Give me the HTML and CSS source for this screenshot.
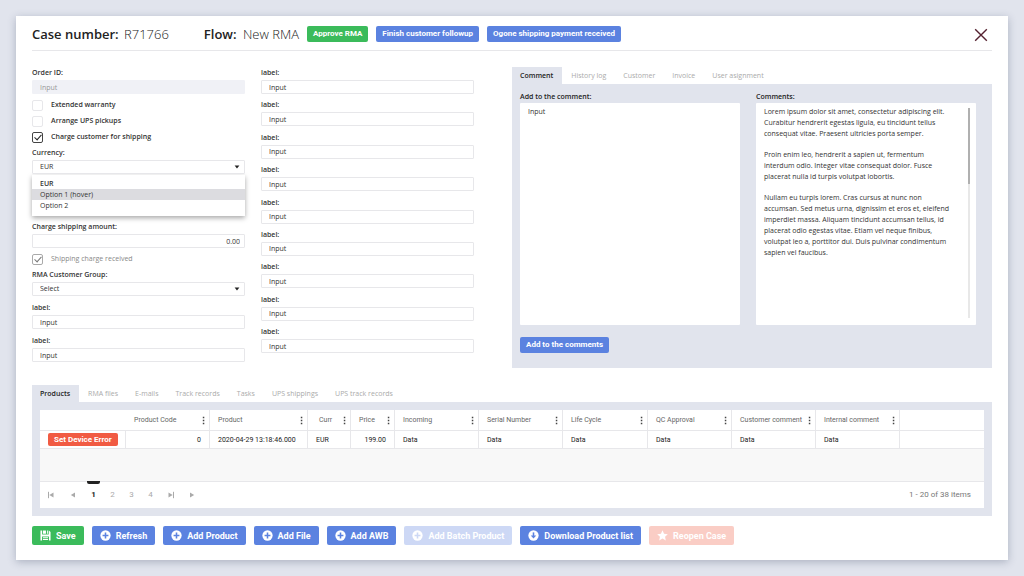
FILE: index.html
```html
<!DOCTYPE html>
<html lang="en">
<head>
<meta charset="utf-8">
<meta name="viewport" content="width=device-width, initial-scale=1">
<title>Case R71766</title>
<link rel="stylesheet" href="styles.css">
</head>
<body>
<svg class="sprite" aria-hidden="true">
  <symbol id="i-plus" viewBox="0 0 12 12"><circle cx="6" cy="6" r="5.6" fill="#fff"/><path d="M6 2.8v6.4M2.8 6h6.4" stroke="var(--btn)" stroke-width="1.7" fill="none"/></symbol>
  <symbol id="i-down" viewBox="0 0 12 12"><circle cx="6" cy="6" r="5.6" fill="#fff"/><path d="M6 2.6v4" stroke="var(--btn)" stroke-width="1.7" fill="none"/><path d="M3 5.9h6L6 9.2z" fill="var(--btn)"/></symbol>
  <symbol id="i-save" viewBox="0 0 12 12"><path d="M.5.5h1.800v4.500h7.200V.5h.3l1.700 1.700v9.300H9.800V7H2.200v4.500H.5z" fill="#fff"/><path d="M3.200.5h3.300v3.500H3.200zM7.600.5h1v3.500h-1zM3.200 7.900h5.600v1H3.200zM3.200 9.800h5.600v1H3.200z" fill="#fff"/></symbol>
  <symbol id="i-star" viewBox="0 0 12 12"><path d="M6 .2l1.700 3.800 4.100.5-3 2.800.8 4.100L6 9.400l-3.600 2 .8-4.100-3-2.800 4.100-.5z" fill="#fff"/></symbol>
  <symbol id="i-caret" viewBox="0 0 6 4"><path d="M.6.5h4.800L3 3.400z" fill="#222"/></symbol>
  <symbol id="i-dots" viewBox="0 0 3 9"><path d="M.8.8h1.500v1.500H.8zM.8 3.800h1.500v1.500H.8zM.8 6.800h1.500v1.500H.8z" fill="#444"/></symbol>
  <symbol id="i-prev" viewBox="0 0 8 8"><path d="M6 1.400v5.200L1.800 4z" fill="#aaa"/></symbol>
  <symbol id="i-next" viewBox="0 0 8 8"><path d="M2 1.400v5.200L6.200 4z" fill="#aaa"/></symbol>
  <symbol id="i-first" viewBox="0 0 8 8"><path d="M6.500 1.400v5.200L2.300 4z" fill="#aaa"/><path d="M1.500.8v6.400" stroke="#aaa"/></symbol>
  <symbol id="i-last" viewBox="0 0 8 8"><path d="M1.500 1.400v5.200L5.700 4z" fill="#aaa"/><path d="M6.500.8v6.400" stroke="#aaa"/></symbol>
</svg>

<main class="card">
  <header class="head">
    <h1 class="title">Case number: <span class="value">R71766</span></h1>
    <h2 class="title flow">Flow: <span class="value">New RMA</span></h2>
    <div class="head-actions">
      <button class="btn small green" type="button">Approve RMA</button>
      <button class="btn small" type="button">Finish customer followup</button>
      <button class="btn small" type="button">Ogone shipping payment received</button>
    </div>
    <button class="close" type="button" aria-label="Close"><svg viewBox="0 0 14 14"><path d="M1.200 1.200l11.600 11.600M12.800 1.200L1.200 12.800" stroke="#54202f" stroke-width="1.400" fill="none"/></svg></button>
  </header>

  <div class="main">
    <form class="col left">
      <div class="field"><label for="order">Order ID:</label><input id="order" class="box" type="text" value="Input" disabled></div>
      <div class="checks">
        <label class="check"><input type="checkbox">Extended warranty</label>
        <label class="check"><input type="checkbox">Arrange UPS pickups</label>
        <label class="check"><input type="checkbox" checked>Charge customer for shipping</label>
      </div>
      <div class="field"><label for="currency">Currency:</label>
        <div class="select"><select id="currency" class="box"><option>EUR</option><option>Option 1</option><option>Option 2</option></select><svg><use href="#i-caret"/></svg></div>
      </div>
      <ul class="menu" role="listbox" aria-label="Currency options">
        <li class="chosen" role="option" aria-selected="true">EUR</li>
        <li class="hover" role="option">Option 1 (hover)</li>
        <li role="option">Option 2</li>
      </ul>
      <div class="field"><label for="amount">Charge shipping amount:</label><input id="amount" class="box num" type="text" value="0.00"></div>
      <div class="checks">
        <label class="check off"><input type="checkbox" checked disabled>Shipping charge received</label>
      </div>
      <div class="field"><label for="group">RMA Customer Group:</label>
        <div class="select"><select id="group" class="box"><option>Select</option></select><svg><use href="#i-caret"/></svg></div>
      </div>
      <div class="field spaced"><label for="l1">label:</label><input id="l1" class="box" type="text" value="Input"></div>
      <div class="field spaced"><label for="l2">label:</label><input id="l2" class="box" type="text" value="Input"></div>
    </form>

    <form class="col right">
      <div class="field"><label for="r1">label:</label><input id="r1" class="box" type="text" value="Input"></div>
      <div class="field"><label for="r2">label:</label><input id="r2" class="box" type="text" value="Input"></div>
      <div class="field"><label for="r3">label:</label><input id="r3" class="box" type="text" value="Input"></div>
      <div class="field"><label for="r4">label:</label><input id="r4" class="box" type="text" value="Input"></div>
      <div class="field"><label for="r5">label:</label><input id="r5" class="box" type="text" value="Input"></div>
      <div class="field"><label for="r6">label:</label><input id="r6" class="box" type="text" value="Input"></div>
      <div class="field"><label for="r7">label:</label><input id="r7" class="box" type="text" value="Input"></div>
      <div class="field"><label for="r8">label:</label><input id="r8" class="box" type="text" value="Input"></div>
      <div class="field"><label for="r9">label:</label><input id="r9" class="box" type="text" value="Input"></div>
    </form>

    <section class="side">
      <nav class="tabs">
        <button class="tab active" type="button">Comment</button>
        <button class="tab" type="button">History log</button>
        <button class="tab" type="button">Customer</button>
        <button class="tab" type="button">Invoice</button>
        <button class="tab" type="button">User asignment</button>
      </nav>
      <div class="panel comments">
        <div class="pane">
          <label for="comment">Add to the comment:</label>
          <textarea id="comment" class="sheet">Input</textarea>
        </div>
        <div class="pane">
          <h3>Comments:</h3>
          <div class="sheet log">
            <div class="log-text">
              <p>Lorem ipsum dolor sit amet, consectetur adipiscing elit. Curabitur hendrerit egestas ligula, eu tincidunt tellus consequat vitae. Praesent ultricies porta semper.</p>
              <p>Proin enim leo, hendrerit a sapien ut, fermentum interdum odio. Integer vitae consequat dolor. Fusce placerat nulla id turpis volutpat lobortis.</p>
              <p>Nullam eu turpis lorem. Cras cursus at nunc non accumsan. Sed metus urna, dignissim et eros et, eleifend imperdiet massa. Aliquam tincidunt accumsan tellus, id placerat odio egestas vitae. Etiam vel neque finibus, volutpat leo a, porttitor dui. Duis pulvinar condimentum sapien vel faucibus.</p>
            </div>
            <div class="scroll"><div class="thumb"></div></div>
          </div>
        </div>
        <button class="btn small add" type="button">Add to the comments</button>
      </div>
    </section>
  </div>

  <section class="products">
    <nav class="tabs">
      <button class="tab active" type="button">Products</button>
      <button class="tab" type="button">RMA files</button>
      <button class="tab" type="button">E-mails</button>
      <button class="tab" type="button">Track records</button>
      <button class="tab" type="button">Tasks</button>
      <button class="tab" type="button">UPS shippings</button>
      <button class="tab" type="button">UPS track records</button>
    </nav>
    <div class="panel grid-panel">
      <div class="grid">
        <table>
          <colgroup><col class="c86"><col class="c84"><col class="c98"><col class="c43"><col class="c44"><col class="c84"><col class="c84"><col class="c85"><col class="c84"><col class="c84"><col class="c84"><col></colgroup>
          <thead>
            <tr>
              <th></th>
              <th><div class="th">Product Code<svg><use href="#i-dots"/></svg></div></th>
              <th><div class="th">Product<svg><use href="#i-dots"/></svg></div></th>
              <th><div class="th inset">Curr<svg><use href="#i-dots"/></svg></div></th>
              <th><div class="th">Price<svg><use href="#i-dots"/></svg></div></th>
              <th><div class="th">Incoming<svg><use href="#i-dots"/></svg></div></th>
              <th><div class="th">Serial Number<svg><use href="#i-dots"/></svg></div></th>
              <th><div class="th">Life Cycle<svg><use href="#i-dots"/></svg></div></th>
              <th><div class="th">QC Approval<svg><use href="#i-dots"/></svg></div></th>
              <th><div class="th">Customer comment<svg><use href="#i-dots"/></svg></div></th>
              <th><div class="th">Internal comment<svg><use href="#i-dots"/></svg></div></th>
              <th></th>
            </tr>
          </thead>
          <tbody>
            <tr>
              <td><button class="btn error" type="button">Set Device Error</button></td>
              <td class="num">0</td>
              <td>2020-04-29 13:18:46.000</td>
              <td>EUR</td>
              <td class="num">199.00</td>
              <td>Data</td>
              <td>Data</td>
              <td>Data</td>
              <td>Data</td>
              <td>Data</td>
              <td>Data</td>
              <td></td>
            </tr>
          </tbody>
        </table>
        <div class="empty"></div>
        <div class="pager">
          <button class="wide" type="button" aria-label="First page"><svg><use href="#i-first"/></svg></button>
          <button class="wide" type="button" aria-label="Previous page"><svg><use href="#i-prev"/></svg></button>
          <button class="current" type="button">1</button>
          <button type="button">2</button>
          <button type="button">3</button>
          <button type="button">4</button>
          <button class="wide" type="button" aria-label="Last page"><svg><use href="#i-last"/></svg></button>
          <button type="button" aria-label="Next page"><svg><use href="#i-next"/></svg></button>
          <span class="count">1 - 20 of 38 items</span>
        </div>
      </div>
    </div>
  </section>

  <footer class="actions">
    <button class="btn green" type="button"><svg><use href="#i-save"/></svg>Save</button>
    <button class="btn" type="button"><svg><use href="#i-plus"/></svg>Refresh</button>
    <button class="btn" type="button"><svg><use href="#i-plus"/></svg>Add Product</button>
    <button class="btn" type="button"><svg><use href="#i-plus"/></svg>Add File</button>
    <button class="btn" type="button"><svg><use href="#i-plus"/></svg>Add AWB</button>
    <button class="btn" type="button" disabled><svg><use href="#i-plus"/></svg>Add Batch Product</button>
    <button class="btn" type="button"><svg><use href="#i-down"/></svg>Download Product list</button>
    <button class="btn red" type="button" disabled><svg><use href="#i-star"/></svg>Reopen Case</button>
  </footer>
</main>
</body>
</html>
```
FILE: styles.css
```css
:root {
  --bg: #e1e4ed;
  --blue: #5b82e0;
  --green: #3bbb5b;
  --red: #f15b43;
  --line: #e7e7ea;
  --text: #333;
}
* { box-sizing: border-box; }
body {
  margin: 0;
  padding: 16px;
  background: var(--bg);
  color: var(--text);
  font: 7px/12px "Open Sans", sans-serif;
}
button, input, select, textarea { font: inherit; color: inherit; margin: 0; }
button { border: 0; background: none; padding: 0; cursor: pointer; }
.sprite { position: absolute; width: 0; height: 0; }
.card {
  background: #fff;
  padding: 0 16px 15px;
  box-shadow: 0 2px 8px rgba(60, 70, 100, .32);
}

/* header */
.head {
  display: flex;
  align-items: center;
  height: 35px;
  padding-top: 2px;
  border-bottom: 1px solid var(--line);
}
.title {
  margin: 0;
  font-size: 13px;
  line-height: 18px;
  font-weight: 600;
  color: #222;
  white-space: nowrap;
}
.title .value { margin-left: 2px; font-weight: 300; }
.flow { margin-left: 35px; }
.flow .value { margin-left: 3px; }
.head-actions { display: flex; gap: 8px; margin-left: 8px; }
.close { width: 14px; height: 14px; margin: 2px 4px 0 auto; }
.close svg { display: block; width: 14px; height: 14px; }

/* buttons */
.btn {
  --btn: var(--blue);
  display: inline-flex;
  align-items: center;
  height: 19px;
  padding: 0 8px;
  border-radius: 2px;
  background: var(--btn);
  color: #fff;
  font: 700 9px/12px Roboto, sans-serif;
  white-space: nowrap;
}
.btn svg { width: 11px; height: 11px; margin-right: 5px; }
.btn.small { height: 16px; padding: 0 6px; font-size: 8px; }
.btn.green { --btn: var(--green); }
.btn.red { --btn: var(--red); }
.btn:disabled { opacity: .3; }
.btn.error { --btn: var(--red); height: 13px; padding: 0 6px; font-size: 8px; }

/* form */
.main {
  display: grid;
  grid-template-columns: 213fr 213fr 502fr;
  gap: 16px;
  padding-top: 16px;
}
.col { display: flex; flex-direction: column; min-width: 0; }
.col.right { justify-content: space-between; padding-bottom: 15px; }
.field > label { display: block; height: 12px; margin-bottom: 1px; font-weight: 600; }
.box {
  display: block;
  width: 100%;
  height: 14px;
  padding: 0 7px;
  border: 1px solid var(--line);
  border-radius: 1px;
  background: #fff;
  line-height: 12px;
}
.box:disabled { background: #f0f1f6; border-color: #f0f1f6; color: #999; }
.num { text-align: right; }
.box.num { padding-right: 4px; }
.select { position: relative; }
.select select { appearance: none; }
.select svg { position: absolute; right: 5px; top: 5px; width: 6px; height: 4px; pointer-events: none; }
.checks { margin: 3px 0 2px; }
.check { display: flex; align-items: center; gap: 8px; height: 16px; font-weight: 600; }
.check input {
  appearance: none;
  width: 11px;
  height: 11px;
  border: 1px solid var(--line);
  border-radius: 2px;
}
.check input:checked { border-color: #444; }
.check input:checked::before {
  content: "";
  display: block;
  width: 3px;
  height: 6px;
  margin: 0 0 0 3px;
  border: solid #222;
  border-width: 0 1px 1px 0;
  transform: rotate(42deg);
}
.check.off { color: #888; font-weight: 400; }
.check.off input:checked { border-color: #aaa; }
.check.off input:checked::before { border-color: #777; }
.menu {
  list-style: none;
  margin: 1px 0 5px;
  padding: 3px 0 5px;
  background: #fff;
  box-shadow: 0 2px 5px rgba(0, 0, 0, .35);
}
.menu li { height: 11px; line-height: 11px; padding: 0 8px; }
.menu .chosen { font-weight: 600; }
.menu .hover { background: #dcdce0; }
.spaced { margin-top: 6px; }

/* tabs and panels */
.side { margin-left: 22px; display: flex; flex-direction: column; }
.tabs { display: flex; gap: 1px; }
.tab { height: 17px; padding: 0 8px; color: #aaa; }
.tab.active { padding-right: 9px; background: var(--bg); color: #222; font-weight: 600; }
.panel { background: var(--bg); }
.comments {
  display: grid;
  grid-template-columns: 1fr 1fr;
  column-gap: 16px;
  padding: 7px 16px 15px 8px;
}
.pane { display: flex; flex-direction: column; min-width: 0; }
.pane label, .pane h3 { margin: 0; font-size: 7px; line-height: 12px; font-weight: 600; color: #222; }
.sheet { height: 222px; background: #fff; border: 0; border-radius: 1px; }
textarea.sheet { width: 100%; padding: 3px 8px; line-height: 11px; resize: none; }
.log { display: flex; padding: 3px 6px 7px 8px; line-height: 11px; }
.log-text { flex: 1; padding-right: 15px; }
.log p { margin: 0 0 10px; }
.scroll { width: 2px; margin-top: 2px; background: #e8e8e8; }
.thumb { height: 36%; background: #b0b0b0; }
.add { margin-top: 12px; justify-self: start; }

/* products */
.products { margin-top: 17px; }
.grid-panel { padding: 8px; }
.grid { background: #fff; font-family: Roboto, sans-serif; }
table { width: 100%; table-layout: fixed; border-collapse: separate; border-spacing: 0; }
.c43 { width: 43px; }
.c44 { width: 44px; }
.c84 { width: 84px; }
.c85 { width: 85px; }
.c86 { width: 86px; }
.c98 { width: 98px; }
th, td {
  padding: 0 8px;
  border-right: 1px solid var(--line);
  border-bottom: 1px solid var(--line);
  text-align: left;
  white-space: nowrap;
}
th { height: 21px; padding-right: 4px; font-weight: 400; color: #666; }
td { height: 18px; color: #222; }
td.num { text-align: right; }
th:first-child, th:last-child, td:last-child { border-right: 0; }
.th { display: flex; align-items: center; justify-content: space-between; }
.th.inset { padding-left: 3px; }
.th svg { width: 3px; height: 9px; flex: none; }
td .btn { vertical-align: middle; }
.empty { height: 33px; background: #f8f8f8; border-bottom: 1px solid var(--line); }
.pager { display: flex; align-items: center; height: 26px; padding-right: 13px; font-size: 8px; color: #777; }
.pager button { width: 19px; height: 26px; color: #aaa; }
.pager .wide { width: 22px; }
.pager svg { display: block; width: 8px; height: 8px; margin: 0 auto; }
.pager .current { color: #222; font-weight: 700; position: relative; }
.pager .current::before {
  content: "";
  position: absolute;
  top: -1px;
  left: 3px;
  right: 3px;
  height: 3px;
  border-radius: 0 0 2px 2px;
  background: #222;
}
.count { margin-left: auto; }

/* footer */
.actions { display: flex; gap: 8px; padding-top: 10px; }
```
